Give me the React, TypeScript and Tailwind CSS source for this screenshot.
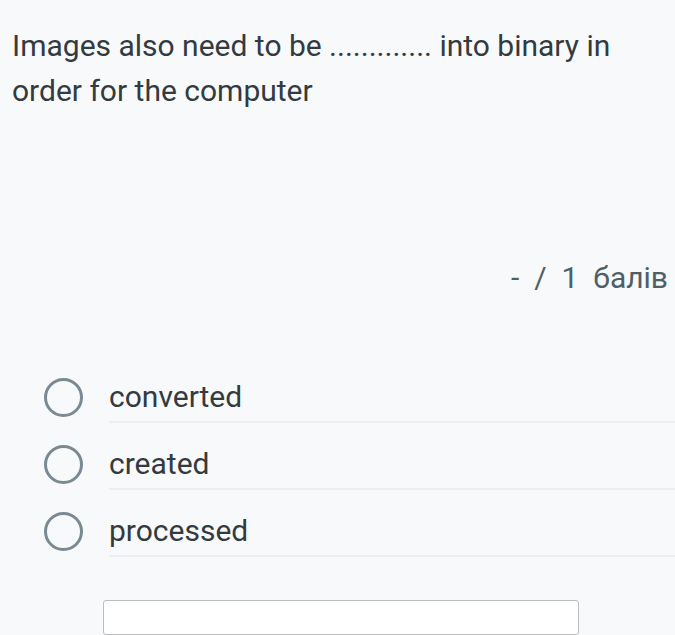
import React from "react";

const options = ["converted", "created", "processed"];

export default function App() {
  return (
    <div
      className="w-[675px] h-[635px] overflow-hidden bg-[#f8f9fb] flex flex-col"
      style={{ fontFamily: "Roboto, 'Noto Sans', sans-serif" }}
    >
      <div className="pl-[12px] pr-[20px] pt-[23px] text-[30px] leading-[45px] text-[#333b40]">
        Images also need to be ............. into binary in order for the computer
      </div>
      <div className="mt-[145px] flex justify-end pr-[7px] text-[30px] leading-[40px] text-[#4f5f67] whitespace-pre">
        {"-  /  1  балів"}
      </div>
      <div className="mt-[58px] flex flex-col">
        {options.map((o) => (
          <div key={o} className="flex h-[67px] pt-[17px]">
            <div className="w-[109px] flex items-center pl-[44px] h-[48px]">
              <div className="w-[39px] h-[39px] rounded-full border-[3.5px] border-[#7a8a92]" />
            </div>
            <div className="flex-1 flex items-center h-[50px] pb-[2px] border-b-2 border-[#eceef0] text-[30px] text-[#333b40]">
              {o}
            </div>
          </div>
        ))}
      </div>
      <div className="mt-[43px] ml-[103px] w-[476px] h-[60px] bg-white border border-[#bdbdbd] rounded-[3px]" />
    </div>
  );
}
